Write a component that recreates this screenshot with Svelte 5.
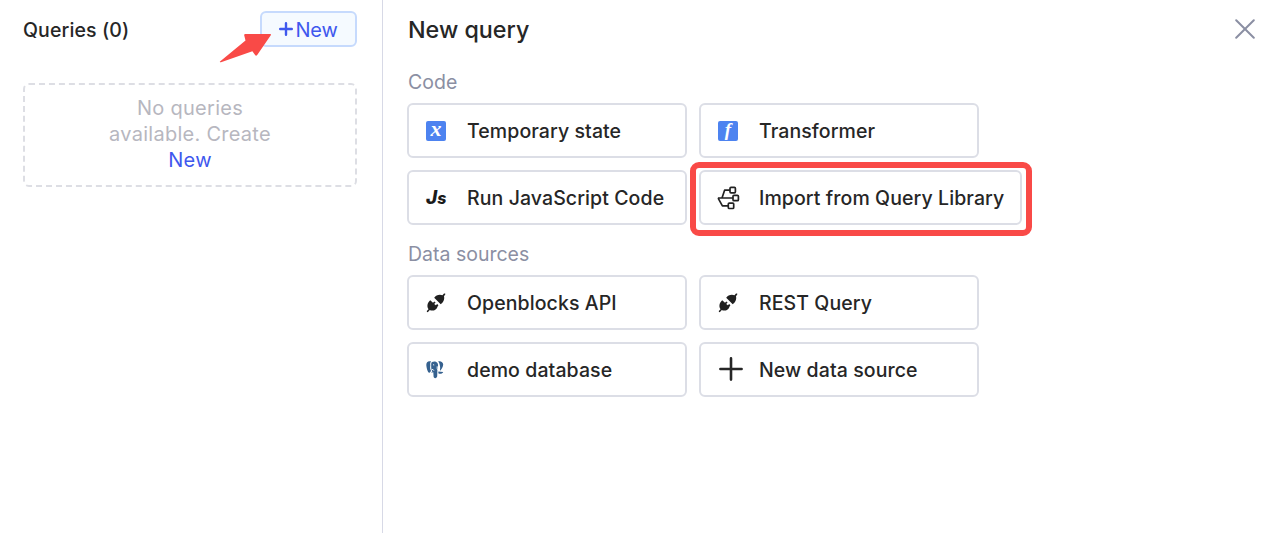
<script>
  const groups = [
    {
      title: 'Code',
      items: [
        { label: 'Temporary state', icon: 'state' },
        { label: 'Transformer', icon: 'fn' },
        { label: 'Run JavaScript Code', icon: 'js' },
        { label: 'Import from Query Library', icon: 'library', marked: true }
      ]
    },
    {
      title: 'Data sources',
      items: [
        { label: 'Openblocks API', icon: 'plug' },
        { label: 'REST Query', icon: 'plug' },
        { label: 'demo database', icon: 'postgres' },
        { label: 'New data source', icon: 'plus' }
      ]
    }
  ];
</script>

<div class="page">
  <aside>
    <header class="side-head">
      <h2>Queries (0)</h2>
      <button class="new">
        <svg width="14" height="14" viewBox="0 0 14 14"><path d="M7 1.2V12.8M1.2 7H12.8" stroke="#3f58ee" stroke-width="2.4" stroke-linecap="round" /></svg>
        <span>New</span>
        <svg class="arrow" width="54" height="30" viewBox="0 0 54 30"><path d="M1 28.6L26.5 7.5L25.2 2.2Q25 1 26.3 1H51Q52.8 1 51.6 2.6L38.2 22Q37 23.4 36.1 22L33.4 18.2L2 29.3Q0.4 29.6 1 28.6Z" fill="#f94a47" /></svg>
      </button>
    </header>
    <div class="empty">
      <span>No queries</span>
      <span>available. Create</span>
      <a href="#new">New</a>
    </div>
  </aside>

  <main>
    <header class="main-head">
      <h1>New query</h1>
      <svg width="20" height="20" viewBox="0 0 20 20"><path d="M1.2 1.2L18.8 18.8M18.8 1.2L1.2 18.8" stroke="#8b8fa3" stroke-width="2" stroke-linecap="round" /></svg>
    </header>
    {#each groups as group}
      <section>
        <h3>{group.title}</h3>
        <div class="grid">
          {#each group.items as item}
            <button class="card" class:marked={item.marked}>
              <span class="icon">
                {#if item.icon === 'state'}
                  <span class="tile x">x</span>
                {:else if item.icon === 'fn'}
                  <span class="tile f">f</span>
                {:else if item.icon === 'js'}
                  <span class="js">J<small>s</small></span>
                {:else if item.icon === 'library'}
                  <svg width="24" height="24" viewBox="0 0 24 24" fill="none" stroke="#222" stroke-width="1.7" stroke-linejoin="round">
                    <path d="M13 4.2H7.6L5 12M.9 12H16M1.1 12.2L5.4 19.8H11.3" />
                    <rect x="13" y="1.4" width="5.4" height="5.4" rx="1" /><rect x="16" y="9.3" width="5.4" height="5.4" rx="1" /><rect x="11.3" y="17.1" width="5.4" height="5.4" rx="1" />
                  </svg>
                {:else if item.icon === 'plug'}
                  <svg width="22" height="22" viewBox="0 0 22 22" fill="#202020">
                    <path d="M9.2 5.8C10.8 2.9 14.8 1.9 17.5 3.2L19 1.6Q20.3 1 20.5 2.1L19 4.2C19.8 7.2 18.3 10.6 15.7 12.2Z" />
                    <path d="M5.2 8.2L8 10.8L9.4 9.4L10.6 10.6L9.2 12L10.8 13.3L12.2 12L13.4 13.2L12.6 14.4C11.8 17.6 8.2 19.6 4.8 18.1L3 20.1Q1.6 20.5 1.8 19.1L3.5 17.2C1.5 14.2 2.5 10.5 5.2 8.2Z" />
                  </svg>
                {:else if item.icon === 'postgres'}
                  <svg width="20" height="20" viewBox="0 0 20 20" fill="#35618f">
                    <path d="M5.2 1.3C3 .8 1.2 2.3 1.3 5C1.5 8 2.8 12.5 4.2 12.8C5.1 13 5.5 11.6 6 10.8C5 9.2 5 7.4 5.3 5.6C5.2 4 5 2.6 6.2 1.6Z" />
                    <path d="M7 2C9 .9 11.6 1.4 12.6 3.2C13.5 5 13 8 12.4 9.4L12.2 16.3C12.1 18.5 8.9 18.8 8.6 16.8L8.3 12.3L6.1 12.8L7.4 11.3C6 9.7 6.2 7 6.2 5C6.2 3.7 6.2 2.6 7 2Z" />
                    <path d="M13.1 1.5C15.6 .7 18.2 2.2 18.2 4.5C18.1 7 16.5 9.5 15.2 10.8C14.6 9.8 15.6 7.8 14.9 5.7C14.6 4 14.1 2.4 13.1 1.5Z" />
                    <path d="M13.4 11.5L18.2 12C17.8 13.8 14.6 14.4 13.3 13.2Z" />
                    <path d="M8 4.7L9.2 5M6.8 9.5Q8.3 8.9 8.9 10.7M12.2 6.3V8.5L13.4 10.4" fill="none" stroke="#fff" stroke-width=".9" />
                  </svg>
                {:else}
                  <svg class="plus" width="24" height="24" viewBox="0 0 24 24"><path d="M12 1.4V22.6M1.4 12H22.6" stroke="#262626" stroke-width="2.6" stroke-linecap="round" /></svg>
                {/if}
              </span>
              <span class="label">{item.label}</span>
            </button>
          {/each}
        </div>
      </section>
    {/each}
  </main>
</div>

<style>
  :global(body) { margin: 0; background: #fff; }
  .page { display: flex; height: 533px; overflow: hidden; box-sizing: border-box; font-family: Inter, sans-serif; font-size: 20px; color: #262626; }
  * { box-sizing: border-box; }
  h1, h2, h3 { margin: 0; }
  button { font: inherit; color: inherit; padding: 0; margin: 0; }
  svg { display: block; flex: none; }
  aside { width: 383px; flex: none; border-right: 1px solid #d7d9e6; padding: 11px 25px 0 23px; }
  .side-head { display: flex; justify-content: space-between; height: 36px; align-items: center; }
  h2 { font-size: 19.5px; font-weight: 500; letter-spacing: .12px; line-height: 36px; padding-top: 2px; white-space: nowrap; }
  .new { position: relative; display: flex; align-items: center; justify-content: center; gap: 2px; width: 97px; height: 36px; border: 2px solid #c6dafd; border-radius: 6px; background: #f5faff; color: #3f58ee; letter-spacing: -.2px; }
  .new > span { padding-top: 1px; }
  .arrow { position: absolute; left: -43px; top: 20px; }
  .empty { margin-top: 36px; height: 104px; border: 2px dashed #dddee4; border-radius: 6px; display: flex; flex-direction: column; align-items: center; padding-top: 10px; line-height: 26px; letter-spacing: .27px; color: #b7b7bf; }
  .empty a { color: #3f58ee; text-decoration: none; }
  main { flex: 1; padding: 0 25px 0 24px; }
  .main-head { display: flex; justify-content: space-between; align-items: center; height: 58px; }
  h1 { font-size: 23.3px; font-weight: 500; letter-spacing: 0; line-height: 58px; padding: 2px 0 0 1px; }
  section { padding-top: 11px; }
  section + section { padding-top: 16px; }
  h3 { font-size: 19.5px; line-height: 26px; font-weight: 400; letter-spacing: 0; padding-left: 1px; color: #8b8fa3; }
  .grid { display: grid; grid-template-columns: 280px 280px; column-gap: 12px; row-gap: 12px; padding-top: 8px; }
  .card { position: relative; display: flex; align-items: center; height: 55px; width: 280px; border: 2px solid #dcdee6; border-radius: 6px; background: #fff; padding-left: 18px; white-space: nowrap; }
  .marked { width: 323px; }
  .marked::after { content: ""; position: absolute; inset: -10px -12px -13px -11px; border: 6px solid #f94a47; border-radius: 9px; }
  .icon { width: 40px; flex: none; display: flex; align-items: center; }
  .icon svg { margin-left: -2px; }
  .icon .plus { margin: -2px 0 0 0; }
  .label { font-size: 19.5px; font-weight: 500; letter-spacing: .09px; line-height: 26px; padding-top: 1px; }
  .tile { display: block; width: 20px; height: 20px; margin: 0 0 0 -1px; border-radius: 2px; background: #4d83f0; color: #fff; font-family: "Liberation Serif", serif; font-style: italic; font-weight: 700; text-align: center; }
  .x { font-size: 22px; line-height: 15px; }
  .f { font-size: 19px; line-height: 18px; }
  .js { font-size: 19px; line-height: 24px; font-style: italic; font-weight: 800; color: #1b1b1b; margin-left: -1px; }
  .js small { font-size: 16px; }
</style>
